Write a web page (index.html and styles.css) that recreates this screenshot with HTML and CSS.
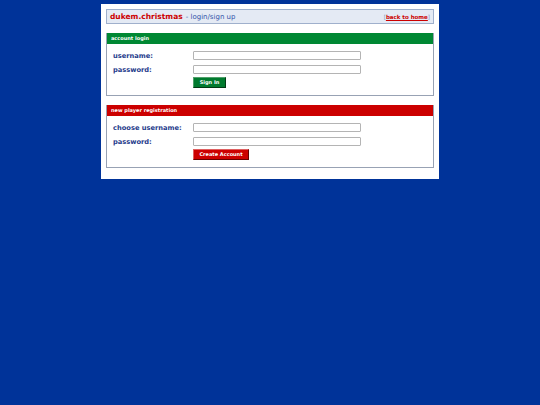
FILE: index.html
```html
<!DOCTYPE html>
<html>
<head>
<meta charset="utf-8">
<link rel="stylesheet" href="styles.css">
</head>
<body>
<div class="page">
  <div class="topbar">
    <div class="title"><span class="site">dukem.christmas</span><span class="sub">- login/sign up</span></div>
    <div class="home"><span class="br">[</span><a href="#">back to home</a><span class="br">]</span></div>
  </div>

  <div class="panel green">
    <div class="panel-head">account login</div>
    <div class="panel-body">
      <div class="row"><label>username:</label><input type="text"></div>
      <div class="row"><label>password:</label><input type="password"></div>
      <div class="row btnrow"><span></span><button class="btn btn-green">Sign In</button></div>
    </div>
  </div>

  <div class="panel red">
    <div class="panel-head">new player registration</div>
    <div class="panel-body">
      <div class="row"><label>choose username:</label><input type="text"></div>
      <div class="row"><label>password:</label><input type="password"></div>
      <div class="row btnrow"><span></span><button class="btn btn-red">Create Account</button></div>
    </div>
  </div>
</div>
</body>
</html>
```
FILE: styles.css
```css
html, body {
  margin: 0;
  padding: 0;
  background: #003399;
  font-family: "DejaVu Sans", Verdana, sans-serif;
}
.page {
  width: 338px;
  margin: 4px auto 0;
  background: #ffffff;
  padding: 5px 5px 11px;
  box-sizing: border-box;
}
.topbar {
  height: 15px;
  box-sizing: border-box;
  background: #e4eaf4;
  border: 1px solid #9fb0cc;
  display: flex;
  align-items: center;
  justify-content: space-between;
  padding: 0 3px 0 3px;
}
.title {
  display: flex;
  align-items: baseline;
  gap: 3px;
}
.site {
  color: #cc0000;
  font-weight: bold;
  font-size: 7.5px;
}
.sub {
  color: #3355aa;
  font-size: 7px;
}
.home {
  font-size: 5.5px;
  font-weight: bold;
}
.home .br { color: #7f93bb; font-weight: normal; }
.home a { color: #cc0000; }
.panel {
  margin-top: 9px;
  border: 1px solid #98a2b4;
  border-top: none;
}
.panel-head {
  height: 11px;
  line-height: 11px;
  color: #ffffff;
  font-weight: bold;
  font-size: 5px;
  padding-left: 4px;
}
.green .panel-head { background: #008833; }
.red .panel-head { background: #cc0000; }
.panel-body {
  padding: 7px 0 7px 6px;
}
.row {
  display: grid;
  grid-template-columns: 80px 168px;
  align-items: center;
  height: 9px;
  margin-bottom: 5px;
}
.row label {
  color: #1f3c8c;
  font-weight: bold;
  font-size: 6.7px;
}
.row input {
  width: 168px;
  height: 9px;
  box-sizing: border-box;
  border: 1px solid #b4b4b4;
  border-radius: 1px;
  padding: 0;
  margin: 0;
  background: #ffffff;
}
.btnrow {
  height: 11px;
  margin-top: -2px;
  margin-bottom: 0;
}
.btn {
  height: 11px;
  padding: 0;
  font-family: "DejaVu Sans", Verdana, sans-serif;
  font-size: 5px;
  font-weight: bold;
  color: #ffffff;
  border: 1px solid;
  border-radius: 0;
  justify-self: start;
  line-height: 9px;
}
.btn-green {
  width: 33px;
  background: #007a2e;
  border-color: #4fa06a #003a14 #003a14 #4fa06a;
}
.btn-red {
  width: 56px;
  background: #cc0000;
  border-color: #e06060 #660000 #660000 #e06060;
}
```
